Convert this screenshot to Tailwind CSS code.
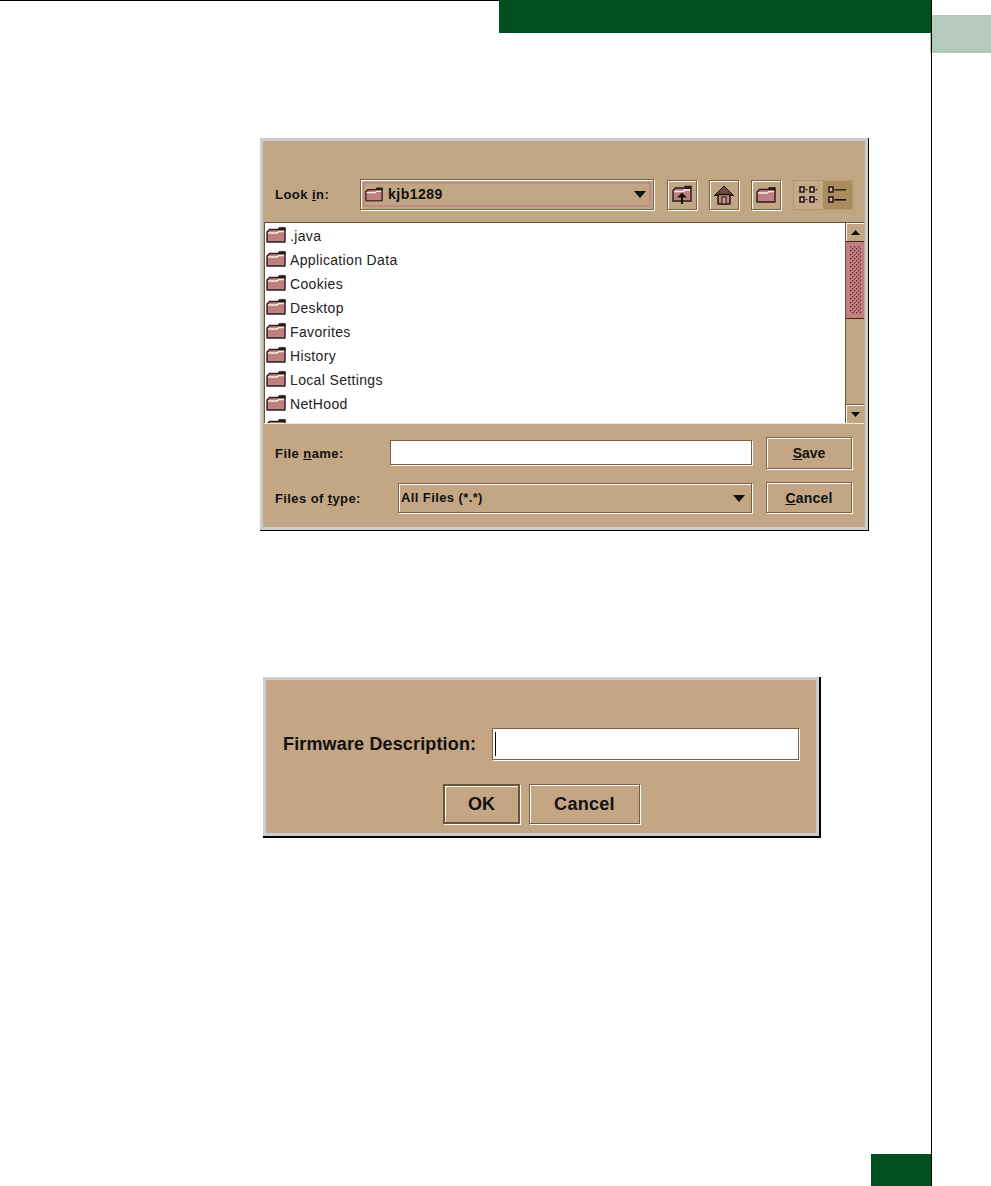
<!DOCTYPE html>
<html lang="en">
<head>
<meta charset="utf-8">
<title>File dialogs</title>
<script src="https://cdn.jsdelivr.net/npm/@tailwindcss/browser@4"></script>
</head>
<body class="bg-white">
<svg width="0" height="0" class="absolute">
  <defs>
    <symbol id="folder" viewBox="0 0 20 16">
      <path d="M1 5 L3.5 2.5 H13 V1 H19 V15 H1 Z" fill="#c07f80" stroke="#2a1c1c" stroke-width="1.4" stroke-linejoin="round"/>
      <rect x="13" y="0.5" width="6.5" height="3" fill="#2a1c1c"/>
      <path d="M2 6 H11 L13 4.5 H18" fill="none" stroke="#f6ecec" stroke-width="1.3"/>
    </symbol>
    <pattern id="dots" width="4" height="4" patternUnits="userSpaceOnUse">
      <rect x="0" y="0" width="1.4" height="1.4" fill="#5a3838"/>
      <rect x="2" y="2" width="1.4" height="1.4" fill="#5a3838"/>
    </pattern>
  </defs>
</svg>
<div class="flex w-[991px] h-[1186px] bg-white overflow-hidden font-['Liberation_Sans',Arial,sans-serif] text-[#111]">
  <div class="flex flex-col w-[932px] h-full border-r border-black">
    <div class="flex h-[33px] shrink-0">
      <div class="w-[499px] border-t border-black"></div>
      <div class="flex-1 bg-[#004f20]"></div>
    </div>

    <section class="ml-[260px] mt-[105px] w-[609px] h-[393px] shrink-0 border-r border-b border-black">
      <div class="flex flex-col w-full h-full border-[3px] border-[#cdcdcd] bg-[#c0a683]">
        <div class="flex items-center h-[31px] mt-[38px] pl-[12px] shrink-0">
          <div class="w-[85px] text-[13px] font-bold tracking-[0.45px]">Look <u>i</u>n:</div>
          <div class="flex items-center w-[294px] h-[31px] border border-[#7a6040] shadow-[1px_1px_0_#fff,inset_1px_1px_0_#fff] p-[2px]">
            <div class="flex items-center w-full h-full border-2 border-[#bf8a84] pr-[3px]">
              <svg class="w-[18px] h-[15px] shrink-0" viewBox="0 0 20 16"><use href="#folder"/></svg>
              <span class="ml-[5px] text-[14px] font-bold tracking-[0.5px]">kjb1289</span>
              <svg class="ml-auto w-[12px] h-[7px]" viewBox="0 0 12 7"><path d="M0 0H12L6 7Z" fill="#111"/></svg>
            </div>
          </div>
          <div class="flex items-center justify-center ml-[13px] w-[30px] h-[30px] border border-[#7a6040] shadow-[1px_1px_0_#fff,inset_1px_1px_0_#fff]">
            <svg class="w-[20px] h-[19px]" viewBox="0 0 20 19">
              <path d="M1 5.5 L3.5 3 H13 V1.5 H19 V16 H1 Z" fill="#c07f80" stroke="#2a1c1c" stroke-width="1.4"/>
              <rect x="13" y="1" width="6.5" height="3" fill="#2a1c1c"/>
              <path d="M2 6.5 H11 L13 5 H18" fill="none" stroke="#f6ecec" stroke-width="1.6"/>
              <path d="M10 7.5 L15 12.5 H11 V19 H9 V12.5 H5 Z" fill="#111"/>
            </svg>
          </div>
          <div class="flex items-center justify-center ml-[12px] w-[30px] h-[30px] border border-[#7a6040] shadow-[1px_1px_0_#fff,inset_1px_1px_0_#fff]">
            <svg class="w-[20px] h-[20px]" viewBox="0 0 20 20">
              <path d="M10 1 L19.5 10.5 H0.5 Z" fill="#6b4e36" stroke="#1e1410" stroke-width="1"/>
              <rect x="4" y="9.5" width="12" height="9.5" fill="#c07f80" stroke="#1e1410" stroke-width="1.4"/>
              <rect x="8" y="12" width="4" height="7" fill="#c0a683" stroke="#1e1410" stroke-width="1"/>
            </svg>
          </div>
          <div class="flex items-center justify-center ml-[12px] w-[30px] h-[30px] border border-[#7a6040] shadow-[1px_1px_0_#fff,inset_1px_1px_0_#fff]">
            <svg class="w-[20px] h-[16px]" viewBox="0 0 20 16"><use href="#folder"/></svg>
          </div>
          <div class="flex ml-[12px] w-[60px] h-[30px] border border-[#b39a6e]">
            <div class="flex items-center justify-center w-[29px] bg-[#c4aa88]">
              <svg class="w-[19px] h-[18px]" viewBox="0 0 19 18">
                <g fill="#e0b0b0" stroke="#2a1c1c" stroke-width="1.6"><rect x="1" y="1" width="4" height="5"/><rect x="11" y="1" width="4" height="5"/><rect x="1" y="11" width="4" height="5"/><rect x="11" y="11" width="4" height="5"/></g>
                <g fill="#2a1c1c"><rect x="6.5" y="3" width="2" height="1.2"/><rect x="16.5" y="3" width="2" height="1.2"/><rect x="6.5" y="13" width="2" height="1.2"/><rect x="16.5" y="13" width="2" height="1.2"/></g>
              </svg>
            </div>
            <div class="flex items-center justify-center flex-1 bg-[#ab8c5c]">
              <svg class="w-[19px] h-[18px]" viewBox="0 0 19 18">
                <g fill="#e0b0b0" stroke="#2a1c1c" stroke-width="1.6"><rect x="1" y="1" width="4" height="5"/><rect x="1" y="11" width="4" height="5"/></g>
                <rect x="6.5" y="3" width="11.5" height="1.6" fill="#3a2a1c"/><rect x="6.5" y="13" width="11.5" height="1.6" fill="#111"/>
              </svg>
            </div>
          </div>
        </div>

        <div class="flex ml-[1px] mt-[12px] w-[600px] h-[202px] shrink-0 border-t border-[#6e5334] border-b border-b-[#efe9e0]">
          <ul class="flex-1 h-full overflow-hidden bg-white border-l border-[#6e5334] pl-[1px] pt-[1px] text-[14px] tracking-[0.35px] text-[#222]">
            <li class="flex items-center h-[24px] gap-[4px]"><svg class="w-[20px] h-[16px] shrink-0 mb-[2px]" viewBox="0 0 20 16"><use href="#folder"/></svg>.java</li>
            <li class="flex items-center h-[24px] gap-[4px]"><svg class="w-[20px] h-[16px] shrink-0 mb-[2px]" viewBox="0 0 20 16"><use href="#folder"/></svg>Application Data</li>
            <li class="flex items-center h-[24px] gap-[4px]"><svg class="w-[20px] h-[16px] shrink-0 mb-[2px]" viewBox="0 0 20 16"><use href="#folder"/></svg>Cookies</li>
            <li class="flex items-center h-[24px] gap-[4px]"><svg class="w-[20px] h-[16px] shrink-0 mb-[2px]" viewBox="0 0 20 16"><use href="#folder"/></svg>Desktop</li>
            <li class="flex items-center h-[24px] gap-[4px]"><svg class="w-[20px] h-[16px] shrink-0 mb-[2px]" viewBox="0 0 20 16"><use href="#folder"/></svg>Favorites</li>
            <li class="flex items-center h-[24px] gap-[4px]"><svg class="w-[20px] h-[16px] shrink-0 mb-[2px]" viewBox="0 0 20 16"><use href="#folder"/></svg>History</li>
            <li class="flex items-center h-[24px] gap-[4px]"><svg class="w-[20px] h-[16px] shrink-0 mb-[2px]" viewBox="0 0 20 16"><use href="#folder"/></svg>Local Settings</li>
            <li class="flex items-center h-[24px] gap-[4px]"><svg class="w-[20px] h-[16px] shrink-0 mb-[2px]" viewBox="0 0 20 16"><use href="#folder"/></svg>NetHood</li>
            <li class="flex items-center h-[24px] gap-[4px]"><svg class="w-[20px] h-[16px] shrink-0 mb-[2px]" viewBox="0 0 20 16"><use href="#folder"/></svg></li>
          </ul>
          <div class="flex flex-col w-[19px] h-full border-l border-[#6e5334]">
            <div class="flex items-center justify-center h-[18px] shrink-0 shadow-[inset_1px_1px_0_#fff]"><svg class="w-[9px] h-[5px]" viewBox="0 0 10 6" preserveAspectRatio="none"><path d="M0 6H10L5 0Z" fill="#111"/></svg></div>
            <div class="h-[78px] shrink-0 bg-[#c37f80] border-y border-[#3a2a20]">
              <svg class="w-full h-full"><rect x="4" y="4" width="11" height="68" fill="url(#dots)"/></svg>
            </div>
            <div class="flex-1 border-b border-[#7a6040]"></div>
            <div class="flex items-center justify-center h-[18px] shrink-0 shadow-[inset_1px_1px_0_#fff]"><svg class="w-[9px] h-[5px]" viewBox="0 0 10 6" preserveAspectRatio="none"><path d="M0 0H10L5 6Z" fill="#111"/></svg></div>
          </div>
        </div>

        <div class="flex flex-col flex-1 pt-[13px] gap-[13px] bg-[#c3a784]">
          <div class="flex items-start h-[32px] pl-[12px] shrink-0">
            <div class="self-center pt-[2px] w-[115px] text-[13px] font-bold tracking-[0.45px]">File <u>n</u>ame:</div>
            <div class="mt-[3px] w-[362px] h-[25px] bg-white border border-[#7a6040] shadow-[1px_1px_0_#fff]"></div>
            <button class="ml-[14px] w-[86px] h-[32px] border border-[#7a6040] shadow-[1px_1px_0_#fff,inset_1px_1px_0_#fff] text-[14px] font-bold"><u>S</u>ave</button>
          </div>
          <div class="flex items-start h-[31px] pl-[12px] shrink-0">
            <div class="self-center pt-[2px] w-[123px] text-[13px] font-bold tracking-[0.4px]">Files of <u>t</u>ype:</div>
            <div class="flex items-center justify-between mt-[1px] w-[354px] h-[30px] border border-[#7a6040] shadow-[1px_1px_0_#fff,inset_1px_1px_0_#fff] pl-[2px] pr-[6px] text-[13px] font-bold tracking-[0.4px]">
              <span>All Files (*.*)</span>
              <svg class="w-[12px] h-[7px]" viewBox="0 0 12 7"><path d="M0 0H12L6 7Z" fill="#111"/></svg>
            </div>
            <button class="ml-[14px] w-[86px] h-[31px] pt-[1px] border border-[#7a6040] shadow-[1px_1px_0_#fff,inset_1px_1px_0_#fff] text-[14px] font-bold tracking-[0.2px]"><u>C</u>ancel</button>
          </div>
        </div>
      </div>
    </section>

    <section class="ml-[263px] mt-[146px] w-[558px] h-[161px] shrink-0 border-r-2 border-b-2 border-black">
      <div class="flex flex-col w-full h-full border-[3px] border-[#cdcdcd] bg-[#c4a584]">
        <div class="flex items-center h-[32px] mt-[48px] pl-[17px] shrink-0">
          <div class="w-[209px] text-[18px] font-bold tracking-[0.15px]">Firmware Description:</div>
          <div class="flex items-center w-[307px] h-[32px] bg-white border border-[#7a6040] shadow-[1px_1px_0_#fff] pl-[2px]">
            <span class="w-[1px] h-[24px] bg-black"></span>
          </div>
        </div>
        <div class="flex mt-[24px] pl-[177px] gap-[9px] shrink-0">
          <button class="w-[77px] h-[40px] border-2 border-[#6e5334] shadow-[1px_1px_0_#fff,inset_1px_1px_0_#fff] text-[18px] font-bold">OK</button>
          <button class="w-[111px] h-[40px] border border-[#7a6040] shadow-[1px_1px_0_#fff,inset_1px_1px_0_#fff] text-[18px] font-bold tracking-[0.3px]">Cancel</button>
        </div>
      </div>
    </section>

    <div class="mt-auto self-end w-[60px] h-[32px] shrink-0 bg-[#004f20]"></div>
  </div>
  <div class="flex-1">
    <div class="relative mt-[15px] h-[38px] bg-[#b5cabd]">
      <div class="absolute left-[-2px] top-[18px] w-[1px] h-[20px] bg-[#b5cabd]"></div>
    </div>
  </div>
</div>
</body>
</html>
